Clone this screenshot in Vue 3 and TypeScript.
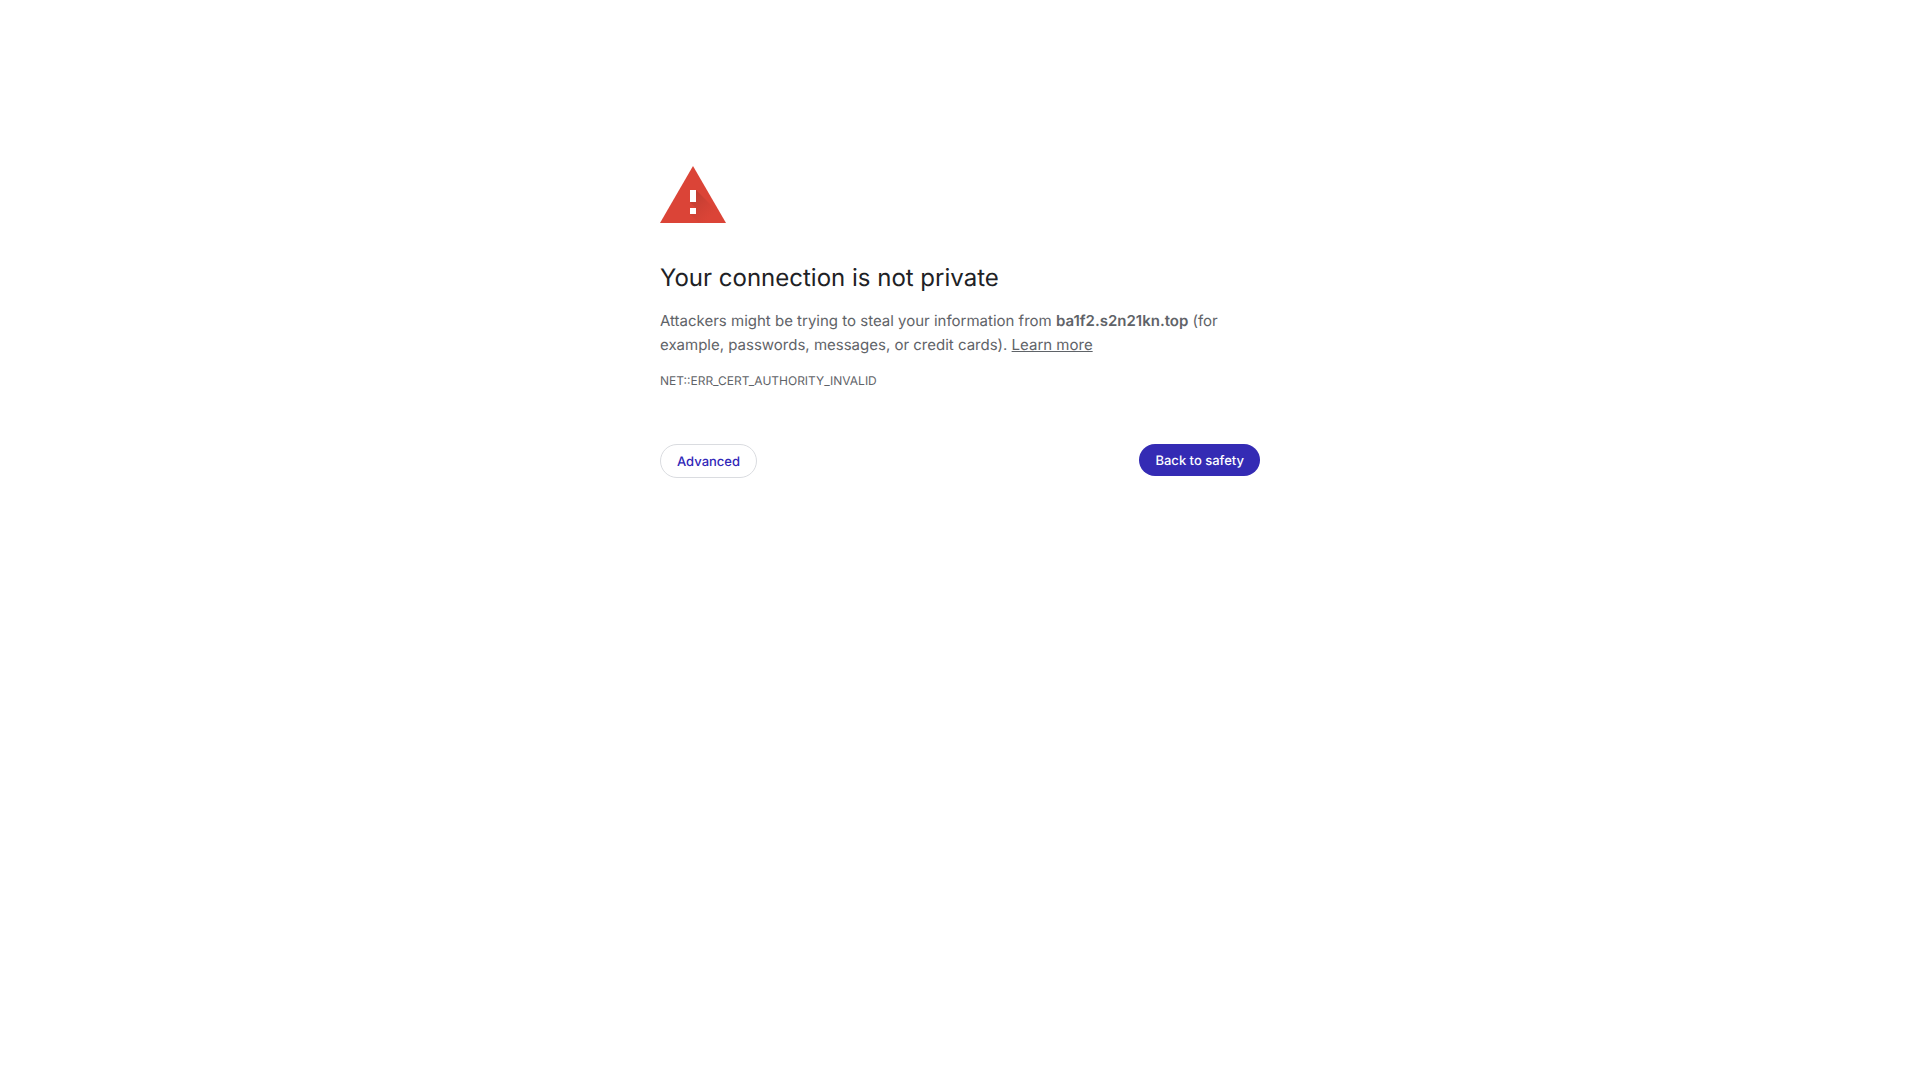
<script setup lang="ts">
const host: string = 'ba1f2.s2n21kn.top'
const errorCode: string = 'NET::ERR_CERT_AUTHORITY_INVALID'
</script>

<template>
  <main class="interstitial">
    <svg class="icon" viewBox="0 0 72 72" aria-hidden="true">
      <defs>
        <linearGradient id="shade" gradientUnits="userSpaceOnUse" x1="30" y1="45" x2="51" y2="66">
          <stop offset="0" stop-color="#b53a2f" stop-opacity="0.8" />
          <stop offset="1" stop-color="#c53e32" stop-opacity="0" />
        </linearGradient>
      </defs>
      <path fill="#db4437" d="M0 72 33 15 66 72z" />
      <path fill="url(#shade)" d="M36 39 63 66 66 72H39L30 63 36 57 30 51z" />
      <path fill="#fff" d="M30 39h6v12h-6zM30 57h6v6h-6z" />
    </svg>
    <h1>Your connection is not private</h1>
    <p class="message">
      Attackers might be trying to steal your information from <strong>{{ host }}</strong> (for
      example, passwords, messages, or credit cards). <a href="#">Learn more</a>
    </p>
    <div class="code">{{ errorCode }}</div>
    <div class="actions">
      <button type="button" class="secondary">Advanced</button>
      <button type="button" class="primary">Back to safety</button>
    </div>
  </main>
</template>

<style>
body {
  background: #fff;
}
</style>

<style scoped>
.interstitial {
  box-sizing: border-box;
  max-width: 600px;
  margin: 0 auto;
  padding-top: 14vh;
  color: #5f6368;
  font-family: Inter, "Liberation Sans", sans-serif;
  font-size: 15px;
  font-weight: 400;
  line-height: 24px;
  text-rendering: geometricPrecision;
}
.icon {
  display: block;
  width: 72px;
  height: 72px;
  margin-bottom: 40px;
}
h1 {
  margin: 0 0 16px;
  color: #202124;
  font-size: 24px;
  font-weight: 400;
  line-height: 30px;
}
.message {
  margin: 0;
}
strong {
  font-weight: 600;
}
a {
  color: #5f6368;
  text-decoration: underline;
}
.code {
  margin-top: 12px;
  font-size: 12px;
}
.actions {
  display: flex;
  align-items: flex-start;
  justify-content: space-between;
  margin-top: 51px;
}
button {
  padding: 9px 16px 7px;
  border: 0;
  border-radius: 20px;
  font-family: inherit;
  font-size: 13px;
  font-weight: 500;
  line-height: 16px;
  text-rendering: inherit;
  cursor: pointer;
}
.secondary {
  border: 1px solid #dadce0;
  background: #fff;
  color: #3127b8;
}
.primary {
  background: #342bb4;
  color: #fff;
}
</style>
